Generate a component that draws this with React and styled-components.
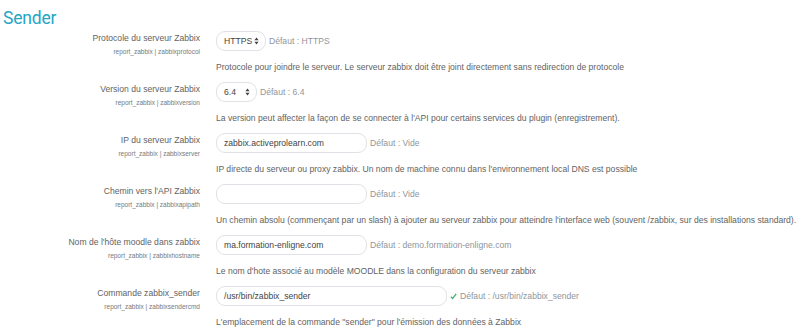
import React from "react";
import styled, { createGlobalStyle } from "styled-components";

const Global = createGlobalStyle`
  html, body { margin: 0; padding: 0; background: #fff; }
  body { font-family: "Liberation Sans", Arial, sans-serif; }
`;

const Page = styled.div`
  padding: 7px 0 0 2px;
  width: 800px;
  box-sizing: border-box;
`;

const Title = styled.h3`
  margin: 0 0 2px 1px;
  font-family: Roboto, "Liberation Sans", sans-serif;
  font-weight: 400;
  font-size: 17.5px;
  line-height: 22px;
  letter-spacing: -0.2px;
  color: #26a5c6;
`;

const Row = styled.div`
  display: grid;
  grid-template-columns: 198px 1fr;
  column-gap: 16px;
  margin-bottom: 9px;
`;

const LabelCol = styled.div`
  text-align: right;
  padding-top: 1px;
`;

const Label = styled.div`
  font-size: 8.6px;
  line-height: 12px;
  color: #636363;
  white-space: nowrap;
`;

const SettingName = styled.div`
  margin-top: 3px;
  font-size: 6.5px;
  line-height: 10px;
  color: #737a80;
  white-space: nowrap;
`;

const FieldCol = styled.div`
  display: flex;
  flex-direction: column;
`;

const ControlLine = styled.div`
  display: flex;
  align-items: center;
  height: 20px;
  gap: 3px;
`;

const Box = styled.div`
  box-sizing: border-box;
  height: 20px;
  width: ${(p) => p.$w}px;
  border: 1px solid #dfe2e6;
  border-radius: 9px;
  display: flex;
  align-items: center;
  padding: 0 7px;
  font-size: 8.6px;
  color: #444;
  background: #fff;
  white-space: nowrap;
`;

const SelectBox = styled(Box)`
  justify-content: space-between;
  padding: 0 6px 0 7px;
`;

const Default = styled.span`
  font-size: 8.6px;
  color: #90959a;
  white-space: nowrap;
  display: inline-flex;
  align-items: center;
  gap: 3px;
`;

const Description = styled.div`
  margin-top: 10px;
  font-size: 8.6px;
  line-height: 12px;
  color: #636363;
  white-space: nowrap;
`;

const Arrows = () => (
  <svg width="5" height="8" viewBox="0 0 5 8">
    <path d="M2.5 0.5 L4.6 3.2 H0.4 Z M2.5 7.5 L4.6 4.8 H0.4 Z" fill="#444" />
  </svg>
);

const Check = () => (
  <svg width="7" height="7" viewBox="0 0 8 8">
    <path d="M1 4.3 L3 6.4 L7 1" fill="none" stroke="#3bb36b" strokeWidth="1.5" />
  </svg>
);

const rows = [
  {
    label: "Protocole du serveur Zabbix",
    name: "report_zabbix | zabbixprotocol",
    kind: "select",
    value: "HTTPS",
    w: 50,
    def: "Défaut : HTTPS",
    desc: "Protocole pour joindre le serveur. Le serveur zabbix doit être joint directement sans redirection de protocole",
  },
  {
    label: "Version du serveur Zabbix",
    name: "report_zabbix | zabbixversion",
    kind: "select",
    value: "6.4",
    w: 41,
    def: "Défaut : 6.4",
    desc: "La version peut affecter la façon de se connecter à l'API pour certains services du plugin (enregistrement).",
  },
  {
    label: "IP du serveur Zabbix",
    name: "report_zabbix | zabbixserver",
    kind: "text",
    value: "zabbix.activeprolearn.com",
    w: 151,
    def: "Défaut : Vide",
    desc: "IP directe du serveur ou proxy zabbix. Un nom de machine connu dans l'environnement local DNS est possible",
  },
  {
    label: "Chemin vers l'API Zabbix",
    name: "report_zabbix | zabbixapipath",
    kind: "text",
    value: "",
    w: 151,
    def: "Défaut : Vide",
    desc: "Un chemin absolu (commençant par un slash) à ajouter au serveur zabbix pour atteindre l'interface web (souvent /zabbix, sur des installations standard).",
  },
  {
    label: "Nom de l'hôte moodle dans zabbix",
    name: "report_zabbix | zabbixhostname",
    kind: "text",
    value: "ma.formation-enligne.com",
    w: 151,
    def: "Défaut : demo.formation-enligne.com",
    desc: "Le nom d'hote associé au modèle MOODLE dans la configuration du serveur zabbix",
  },
  {
    label: "Commande zabbix_sender",
    name: "report_zabbix | zabbixsendercmd",
    kind: "text",
    value: "/usr/bin/zabbix_sender",
    w: 231,
    def: "Défaut : /usr/bin/zabbix_sender",
    check: true,
    desc: "L'emplacement de la commande \"sender\" pour l'émission des données à Zabbix",
  },
];

export default function App() {
  return (
    <>
      <Global />
      <Page>
        <Title>Sender</Title>
        {rows.map((r) => (
          <Row key={r.name}>
            <LabelCol>
              <Label>{r.label}</Label>
              <SettingName>{r.name}</SettingName>
            </LabelCol>
            <FieldCol>
              <ControlLine>
                {r.kind === "select" ? (
                  <SelectBox $w={r.w}>
                    <span>{r.value}</span>
                    <Arrows />
                  </SelectBox>
                ) : (
                  <Box $w={r.w}>{r.value}</Box>
                )}
                <Default>
                  {r.check && <Check />}
                  {r.def}
                </Default>
              </ControlLine>
              <Description>{r.desc}</Description>
            </FieldCol>
          </Row>
        ))}
      </Page>
    </>
  );
}
